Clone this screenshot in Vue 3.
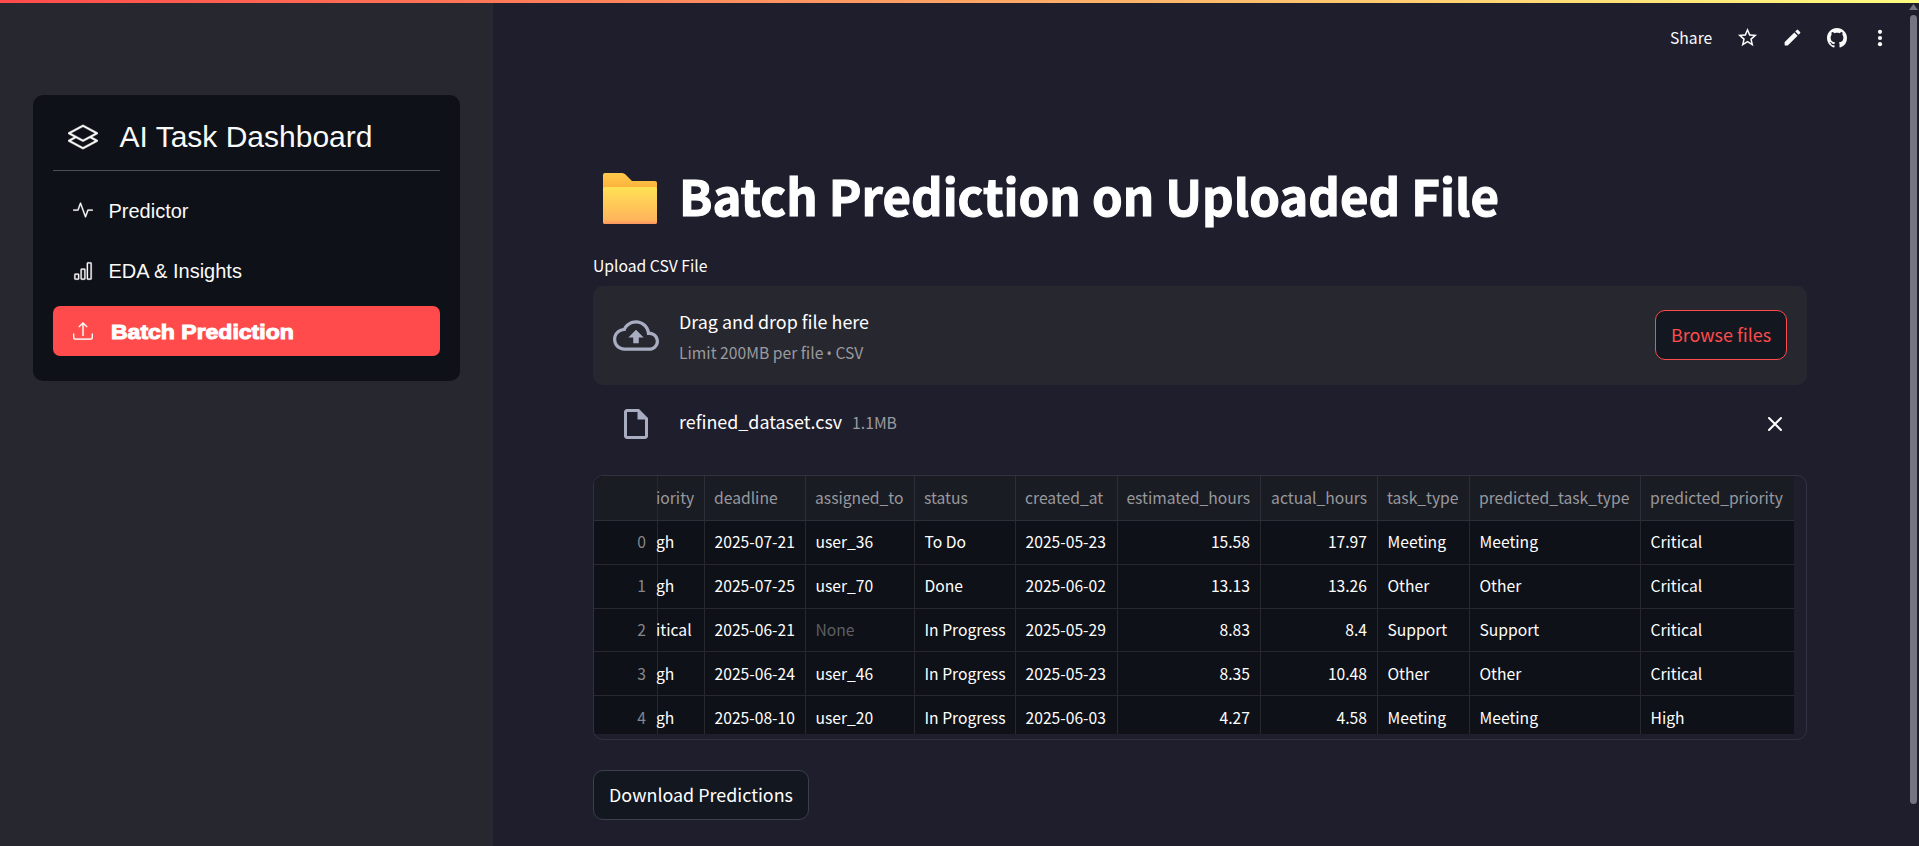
<script setup>
const navItems = [
  {
    label: 'Predictor',
    icon: 'M6 2a.5.5 0 0 1 .47.33L10 12.036l1.53-4.208A.5.5 0 0 1 12 7.5h3.5a.5.5 0 0 1 0 1h-3.15l-1.88 5.17a.5.5 0 0 1-.94 0L6 3.964 4.47 8.171A.5.5 0 0 1 4 8.5H.5a.5.5 0 0 1 0-1h3.15l1.88-5.17A.5.5 0 0 1 6 2',
  },
  {
    label: 'EDA & Insights',
    icon: 'M4 11H2v3h2zm5-4H7v7h2zm5-5v12h-2V2zm-2-1a1 1 0 0 0-1 1v12a1 1 0 0 0 1 1h2a1 1 0 0 0 1-1V2a1 1 0 0 0-1-1zM6 7a1 1 0 0 1 1-1h2a1 1 0 0 1 1 1v7a1 1 0 0 1-1 1H7a1 1 0 0 1-1-1zm-5 4a1 1 0 0 1 1-1h2a1 1 0 0 1 1 1v3a1 1 0 0 1-1 1H2a1 1 0 0 1-1-1z',
  },
  {
    label: 'Batch Prediction',
    active: true,
    icon: 'M.5 9.9a.5.5 0 0 1 .5.5v2.5a1 1 0 0 0 1 1h12a1 1 0 0 0 1-1v-2.5a.5.5 0 0 1 1 0v2.5a2 2 0 0 1-2 2H2a2 2 0 0 1-2-2v-2.5a.5.5 0 0 1 .5-.5M7.646 1.146a.5.5 0 0 1 .708 0l3 3a.5.5 0 0 1-.708.708L8.5 2.707V11.5a.5.5 0 0 1-1 0V2.707L5.354 4.854a.5.5 0 1 1-.708-.708z',
  },
]

const columns = [
  { key: 'index', title: '' },
  { key: 'priority', title: 'iority' },
  { key: 'deadline', title: 'deadline' },
  { key: 'assigned', title: 'assigned_to' },
  { key: 'status', title: 'status' },
  { key: 'created', title: 'created_at' },
  { key: 'estimated', title: 'estimated_hours' },
  { key: 'actual', title: 'actual_hours' },
  { key: 'type', title: 'task_type' },
  { key: 'ptype', title: 'predicted_task_type' },
  { key: 'ppriority', title: 'predicted_priority' },
]

// The priority column is scrolled halfway under the index column.
const rows = [
  ['0', 'gh', '2025-07-21', 'user_36', 'To Do', '2025-05-23', '15.58', '17.97', 'Meeting', 'Meeting', 'Critical'],
  ['1', 'gh', '2025-07-25', 'user_70', 'Done', '2025-06-02', '13.13', '13.26', 'Other', 'Other', 'Critical'],
  ['2', 'itical', '2025-06-21', 'None', 'In Progress', '2025-05-29', '8.83', '8.4', 'Support', 'Support', 'Critical'],
  ['3', 'gh', '2025-06-24', 'user_46', 'In Progress', '2025-05-23', '8.35', '10.48', 'Other', 'Other', 'Critical'],
  ['4', 'gh', '2025-08-10', 'user_20', 'In Progress', '2025-06-03', '4.27', '4.58', 'Meeting', 'Meeting', 'High'],
]
</script>

<template>
  <div class="app">
    <div class="decoration"></div>

    <aside class="sidebar">
      <nav class="menu">
        <div class="menu-title">
          <svg viewBox="0 0 16 16" width="30" height="30" fill="currentColor" stroke="currentColor" stroke-width="0.2">
            <path d="M8.235 1.559a.5.5 0 0 0-.47 0l-7.5 4a.5.5 0 0 0 0 .882L3.188 8 .264 9.559a.5.5 0 0 0 0 .882l7.5 4a.5.5 0 0 0 .47 0l7.5-4a.5.5 0 0 0 0-.882L12.813 8l2.922-1.559a.5.5 0 0 0 0-.882zm3.515 7.008L14.438 10 8 13.433 1.562 10 4.25 8.567l3.515 1.874a.5.5 0 0 0 .47 0zM8 9.433 1.562 6 8 2.567 14.438 6z" />
          </svg>
          <span>AI Task Dashboard</span>
        </div>
        <div class="menu-list">
          <a v-for="item in navItems" :key="item.label" class="menu-item" :class="{ active: item.active }">
            <svg viewBox="0 0 16 16" width="20" height="20" fill="currentColor" stroke="currentColor" stroke-width="0.2"><path :d="item.icon" /></svg>
            <span>{{ item.label }}</span>
          </a>
        </div>
      </nav>
    </aside>

    <main class="main">
      <header class="toolbar">
        <span class="share">Share</span>
        <svg class="star" viewBox="0 0 24 24" width="23" height="23" fill="currentColor">
          <path d="M22 9.24l-7.19-.62L12 2 9.19 8.63 2 9.24l5.46 4.73L5.82 21 12 17.27 18.18 21l-1.63-7.03L22 9.24zM12 15.4l-3.76 2.27 1-4.28-3.32-2.88 4.38-.38L12 6.1l1.71 4.04 4.38.38-3.32 2.88 1 4.28L12 15.4z" />
        </svg>
        <svg class="pencil" viewBox="0 0 24 24" width="21" height="21" fill="currentColor">
          <path d="M3 17.46v3.04c0 .28.22.5.5.5h3.04c.13 0 .26-.05.35-.15L17.81 9.94l-3.75-3.75L3.15 17.1c-.1.1-.15.22-.15.36zM20.71 7.04a1 1 0 0 0 0-1.41l-2.34-2.34a1 1 0 0 0-1.41 0l-1.83 1.83 3.75 3.75 1.83-1.83z" />
        </svg>
        <svg class="github" viewBox="0 0 16 16" width="20" height="20" fill="currentColor">
          <path d="M8 0C3.58 0 0 3.58 0 8c0 3.54 2.29 6.53 5.47 7.59.4.07.55-.17.55-.38 0-.19-.01-.82-.01-1.49-2.01.37-2.53-.49-2.69-.94-.09-.23-.48-.94-.82-1.13-.28-.15-.68-.52-.01-.53.63-.01 1.08.58 1.23.82.72 1.21 1.87.87 2.33.66.07-.52.28-.87.51-1.07-1.78-.2-3.64-.89-3.64-3.95 0-.87.31-1.59.82-2.15-.08-.2-.36-1.02.08-2.12 0 0 .67-.21 2.2.82.64-.18 1.32-.27 2-.27s1.36.09 2 .27c1.53-1.04 2.2-.82 2.2-.82.44 1.1.16 1.92.08 2.12.51.56.82 1.27.82 2.15 0 3.07-1.87 3.75-3.65 3.95.29.25.54.73.54 1.48 0 1.07-.01 1.93-.01 2.2 0 .21.15.46.55.38A8.01 8.01 0 0 0 16 8c0-4.42-3.58-8-8-8z" />
        </svg>
        <svg class="dots" viewBox="0 0 6 18" width="6" height="18" fill="currentColor">
          <circle cx="3" cy="2.8" r="2.1" /><circle cx="3" cy="9" r="2.1" /><circle cx="3" cy="15.2" r="2.1" />
        </svg>
      </header>

      <section class="content">
        <h1 class="title">
          <svg class="folder" viewBox="0 0 54 51" width="54" height="51">
            <defs>
              <linearGradient id="folderBack" x1="0" y1="0" x2="0" y2="1">
                <stop offset="0" stop-color="#ffcb4d" />
                <stop offset="0.3" stop-color="#fdb13a" />
              </linearGradient>
              <linearGradient id="folderFront" x1="0" y1="0" x2="0" y2="1">
                <stop offset="0" stop-color="#ffe154" />
                <stop offset="0.9" stop-color="#ffb45c" />
                <stop offset="1" stop-color="#fb9562" />
              </linearGradient>
            </defs>
            <path d="M2 0H19Q21 0 22.500 1.500L29 8H52Q54 8 54 10V49Q54 51 52 51H2Q0 51 0 49V2Q0 0 2 0Z" fill="url(#folderBack)" />
            <path d="M1.500 14H52.500Q54 14 54 15.500V49Q54 51 52 51H2Q0 51 0 49V15.500Q0 14 1.500 14Z" fill="url(#folderFront)" />
          </svg>
          <span>Batch Prediction on Uploaded File</span>
        </h1>

        <div class="label">Upload CSV File</div>
        <div class="dropzone">
          <svg class="cloud" viewBox="0 4 24 16" width="46" height="31" fill="currentColor">
            <path d="M19.35 10.04C18.67 6.59 15.64 4 12 4 9.11 4 6.6 5.64 5.35 8.04 2.34 8.36 0 10.91 0 14c0 3.31 2.69 6 6 6h13c2.76 0 5-2.24 5-5 0-2.64-2.05-4.78-4.65-4.96zM19 18.300H6c-2.400 0-4.300-1.900-4.300-4.300S3.600 9.700 6 9.700h.5C7.200 7.400 9.400 5.700 12 5.700c3.100 0 5.700 2.600 5.700 5.700v.300H19c1.800 0 3.300 1.500 3.300 3.300S20.800 18.300 19 18.300zM8 13h2.550v3h2.900v-3H16l-4-4z" />
          </svg>
          <div class="drop-text">
            <span class="drop-main">Drag and drop file here</span>
            <span class="drop-sub">Limit 200MB per file <span class="bullet">•</span> CSV</span>
          </div>
          <button class="btn browse">Browse files</button>
        </div>

        <div class="file-row">
          <svg class="file-icon" viewBox="0 0 24 24" width="36" height="36" fill="currentColor">
            <path d="M6 2c-1.100 0-1.990.9-1.990 2L4 20c0 1.100.89 2 1.990 2H18c1.100 0 2-.9 2-2V8l-6-6H6zm0 2h7v5h5v11H6V4z" />
          </svg>
          <span class="file-name">refined_dataset.csv</span>
          <span class="file-size">1.1MB</span>
          <svg class="close" viewBox="0 0 16 16" width="16" height="16" fill="none" stroke="currentColor" stroke-width="2" stroke-linecap="round">
            <path d="M2 2L14 14M14 2L2 14" />
          </svg>
        </div>

        <div class="frame">
          <div class="grid">
            <div class="row head">
              <div v-for="c in columns" :key="c.key" class="cell" :class="c.key"><span>{{ c.title }}</span></div>
            </div>
            <div v-for="r in rows" :key="r[0]" class="row">
              <div
                v-for="(v, i) in r"
                :key="i"
                class="cell"
                :class="[columns[i].key, { none: v === 'None' }]"
              ><span>{{ v }}</span></div>
            </div>
          </div>
        </div>

        <button class="btn download">Download Predictions</button>
      </section>
    </main>

    <div class="scrollbar">
      <div class="arrow"></div>
      <div class="thumb"></div>
    </div>
  </div>
</template>

<style>
html,
body {
  margin: 0;
  background: #1f1e2d;
  overflow: hidden;
}
</style>

<style scoped>
* {
  box-sizing: border-box;
}
.app {
  position: relative;
  display: flex;
  width: 100%;
  height: 846px;
  overflow: hidden;
  background: #1f1e2d;
  color: #fff;
  font-family: "Source Sans Pro", "Noto Sans CJK SC", "Noto Sans", sans-serif;
  font-size: 17.9px;
  line-height: 26px;
}
svg {
  display: block;
  flex: none;
}
.decoration {
  position: absolute;
  inset: 0 0 auto 0;
  height: 3px;
  background: linear-gradient(90deg, #ff4b4b, #fffd80);
  z-index: 2;
}
.sidebar {
  width: 493px;
  flex: none;
  padding: 95px 33px 0;
  background: #272730;
}
.menu {
  width: 427px;
  height: 286px;
  padding: 20px;
  border-radius: 10px;
  background: #0e1117;
  font-family: "Liberation Sans", Arial, sans-serif;
  color: #fafafa;
}
.menu-title {
  display: flex;
  align-items: center;
  gap: 21.500px;
  height: 56px;
  padding: 0 0 11px 15px;
  border-bottom: 1px solid #4d4f55;
  font-size: 30px;
  line-height: 34px;
}
.menu-list {
  display: flex;
  flex-direction: column;
  gap: 10.500px;
  padding-top: 14px;
}
.menu-item {
  display: flex;
  align-items: center;
  gap: 15.500px;
  height: 50px;
  padding-left: 20px;
  border-radius: 7px;
  font-size: 20px;
  line-height: 24px;
}
.menu-item span {
  padding-top: 1px;
}
.menu-item.active {
  background: #ff4b4b;
  color: #fff;
  font-weight: 700;
}
.menu-item.active span {
  margin-left: 2px;
  transform: scaleX(1.15);
  transform-origin: left;
  -webkit-text-stroke: 1px #fff;
}
.main {
  flex: 1;
  min-width: 0;
  display: flex;
  flex-direction: column;
}
.toolbar {
  display: flex;
  align-items: center;
  height: 75px;
  padding-left: 1177px;
  color: #fafafa;
}
.share {
  width: 42px;
  font-size: 15.700px;
  padding-top: 1px;
  white-space: nowrap;
}
.star {
  margin-left: 24px;
}
.pencil {
  margin-left: 23px;
}
.github {
  margin-left: 24px;
}
.dots {
  margin-left: 29.500px;
}
.content {
  display: flex;
  flex-direction: column;
  width: 1214px;
  margin-left: 100px;
  padding-top: 88px;
}
.title {
  display: flex;
  align-items: center;
  height: 70px;
  margin: 0;
  padding-left: 10px;
  font-size: 49.150px;
  font-weight: 700;
  line-height: 70px;
  white-space: nowrap;
}
.title .folder {
  margin-right: 22px;
}
.title span {
  margin-top: -7px;
  -webkit-text-stroke: 1.1px #fff;
}
.label {
  height: 26px;
  margin-top: 20px;
  font-size: 15.700px;
  margin-bottom: 7px;
}
.dropzone {
  display: flex;
  align-items: center;
  height: 99px;
  padding: 0 20px;
  border-radius: 10px;
  background: #272730;
}
.cloud,
.file-icon {
  color: #a9adc1;
}
.cloud {
  margin-right: 20px;
}
.drop-text {
  display: flex;
  flex-direction: column;
  gap: 6px;
  padding-top: 2px;
}
.drop-sub {
  color: #9a9a9f;
  font-size: 15.700px;
}
.bullet {
  display: inline-block;
  width: 5px;
  font-family: "Noto Sans", sans-serif;
  font-size: 14px;
  line-height: 1;
  text-indent: -0.5px;
}
.btn {
  height: 50px;
  padding: 0 15px 3px;
  border: 1px solid #3d3f4b;
  border-radius: 10px;
  background: #131720;
  color: #fff;
  font: inherit;
  white-space: nowrap;
}
.browse {
  width: 132px;
  margin: 0 0 1px auto;
  border-color: #ff4b4b;
  color: #ff4b4b;
}
.file-row {
  display: flex;
  align-items: center;
  height: 40px;
  margin-top: 19px;
  padding: 0 24.500px 0 25px;
}
.file-icon {
  margin-right: 25px;
}
.file-name {
  padding-bottom: 6px;
}
.file-size {
  padding-bottom: 3px;
  margin-left: 10px;
  font-size: 15.700px;
  color: #9a9a9f;
}
.close {
  margin-left: auto;
}
.frame {
  height: 265px;
  margin-top: 31px;
  border: 1px solid #313240;
  border-radius: 10px;
  overflow: hidden;
}
.grid {
  width: 1200px;
  height: 258px;
  overflow: hidden;
  background: #0e1117;
}
.row {
  display: grid;
  grid-template-columns: 62px 49px 101px 109px 101px 101.500px 143.500px 117px 92px 171px 153px;
  height: 43.800px;
  border-bottom: 1px solid #27292f;
}
.row.head {
  height: 45px;
  background: #1a1c24;
  color: #98999d;
  border-color: #2d2f38;
}
.cell {
  display: flex;
  align-items: center;
  min-width: 0;
  padding: 0 10px 0 9.500px;
  border-right: 1px solid #27292f;
  font-size: 15.670px;
  white-space: nowrap;
}
.head .cell {
  padding-left: 9px;
  border-color: #2d2f38;
}
.cell.index,
.cell.ppriority {
  border-right: 0;
}
.cell.index {
  justify-content: flex-end;
  color: #85868b;
}
.cell.priority {
  padding: 0;
  background: linear-gradient(#27292f, #27292f) 1px 0 / 1px 100% no-repeat;
}
.cell.estimated,
.cell.actual {
  justify-content: flex-end;
}
.cell.none {
  color: #5d5f64;
}
.download {
  width: 216px;
  margin-top: 30px;
}
.scrollbar {
  position: absolute;
  top: 4px;
  right: 1px;
  width: 9px;
  display: flex;
  flex-direction: column;
  align-items: center;
  gap: 5px;
}
.arrow {
  width: 9px;
  height: 6px;
  background: #757581;
  clip-path: polygon(50% 0, 100% 100%, 0 100%);
}
.thumb {
  width: 7px;
  height: 789px;
  border-radius: 4px;
  background: #757581;
}
</style>
